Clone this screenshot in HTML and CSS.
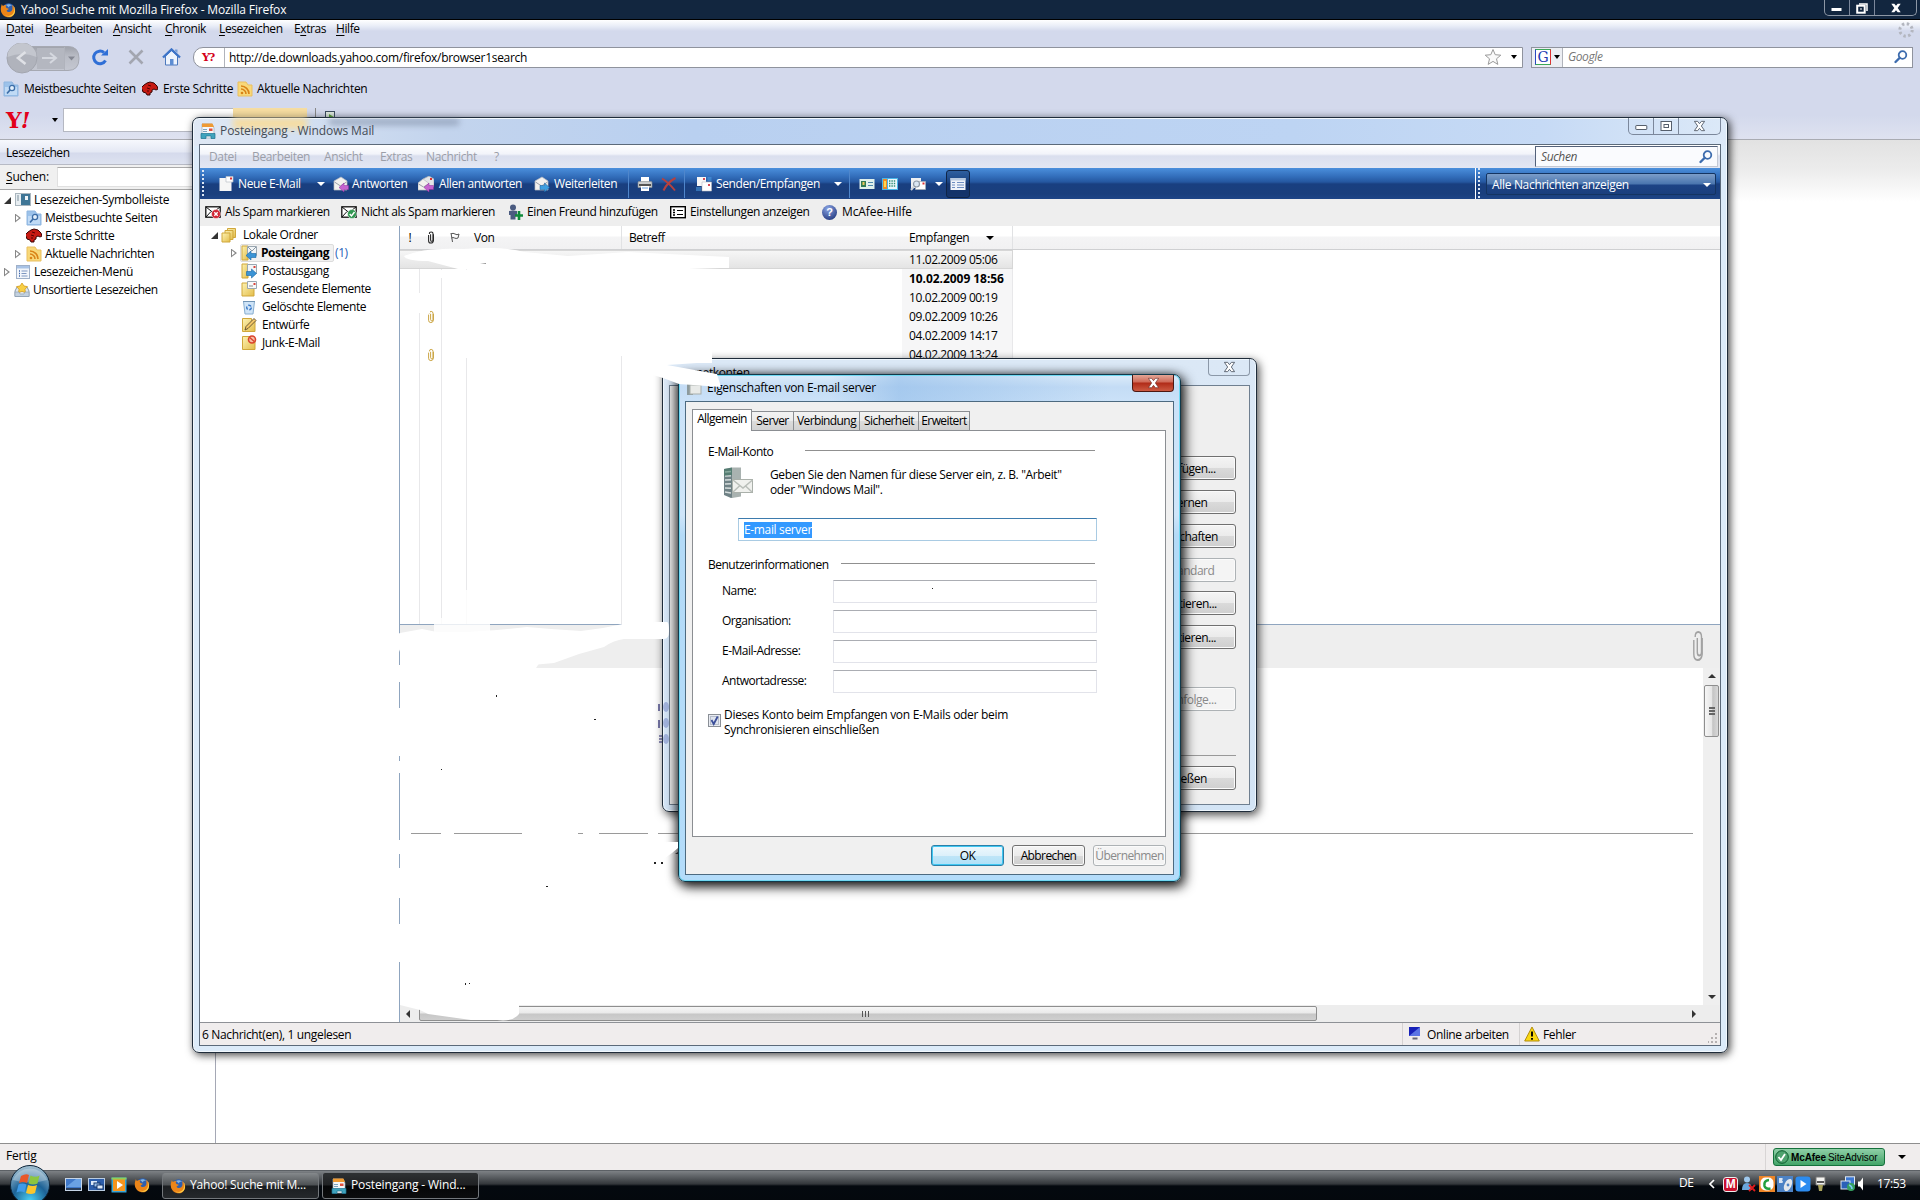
FILE: index.html
```
<!DOCTYPE html>
<html lang="de">
<head>
    <meta charset="UTF-8">
    <title>Yahoo! Suche mit Mozilla Firefox - Mozilla Firefox</title>
    <link rel="stylesheet" href="styles.css">
</head>
<body>
    <!-- Shared icons -->
    <svg class="defs" width="0" height="0">
        <defs>
            <linearGradient id="gFolder" x1="0" y1="0" x2="1" y2="1"><stop offset="0" stop-color="#fdf3b5"/><stop offset="1" stop-color="#e3bd4a"/></linearGradient>
            <radialGradient id="gOrb" cx=".5" cy=".9" r=".9"><stop offset="0" stop-color="#49d0f5"/><stop offset=".5" stop-color="#1d6296"/><stop offset="1" stop-color="#a8c4d4"/></radialGradient>
        </defs>
        <symbol id="firefox" viewBox="0 0 16 16">
            <circle cx="8.6" cy="7.4" r="6.2" fill="#2f5fae"/>
            <path d="M6 3c2-1.500 5-1 6 1-2-.5-3 .3-3 1.500z" fill="#7fb6e8"/>
            <path d="M2 2c0 1 .5 1.500 1 2 1-.8 2-1 3.500-1C5.500 4 5.500 5 6.500 6c1 .6 2 .5 2.500.8-.5 1-2 1-2.500 2 .8 1.500 3.500 1.800 5 .2C13 7.500 12.500 4.500 12 3c3 2 4 5.500 2.500 8.500C13 15 9.500 16 6.500 15 2.500 13.800.5 10 .8 6.500 1 4.500 1.500 3 2 2z" fill="#ec8518"/>
            <path d="M13.500 4c1.500 3 1 7-2 9-2 1.300-4.500 1.200-6.500 0 3 2.800 8 2 9.500-1.800 1-2.500.5-5.200-1-7.200z" fill="#fbd24a"/>
        </symbol>
        <symbol id="mostvisited" viewBox="0 0 16 16">
            <path d="M1 1h8l2 3h4v11H1z" fill="#9cc2ea" stroke="#8fb6e0"/>
            <path d="M2 6h12v8H2z" fill="#c0daf5"/>
            <circle cx="9" cy="7" r="2.600" fill="#e4f0fc" stroke="#3c6da6" stroke-width="1.300"/>
            <path d="M7 9l-3 3.500" stroke="#3c6da6" stroke-width="1.700"/>
        </symbol>
        <symbol id="dino" viewBox="0 0 16 16">
            <path d="M2 4l3-2 3-1 4 1 3 3 1 3-2 1-2-1-2 1 0 2-2 1 0 2-3 0-1-2-3-1-1-3-1-1z" fill="#c61a12" stroke="#3a0503"/>
            <path d="M6 4l3 1M5 7l3 1M5 10l2 0" stroke="#500" />
        </symbol>
        <symbol id="rss" viewBox="0 0 16 16">
            <path d="M1 1h8l2 3h4v11H1z" fill="#f8d879" stroke="#e9bf60"/>
            <path d="M4 8a5 5 0 0 1 5 5M4 5a8 8 0 0 1 8 8" fill="none" stroke="#d98316" stroke-width="1.600"/>
            <circle cx="5" cy="12" r="1.300" fill="#d98316"/>
        </symbol>
        <symbol id="bmbar" viewBox="0 0 16 16">
            <rect x=".5" y="1.500" width="15" height="12" fill="#e8eef2" stroke="#aab6be"/>
            <rect x="6" y="2" width="9" height="11" fill="#3f7696"/><rect x="10" y="4" width="3" height="4" fill="#eef4f8"/>
            <path d="M2 4h2M2 6h2M2 8h2" stroke="#7d8f9b"/>
        </symbol>
        <symbol id="bmmenu" viewBox="0 0 16 16">
            <rect x="1.500" y="1.500" width="13" height="13" fill="#f3f6fb" stroke="#9fb0c8"/>
            <rect x="2" y="2" width="12" height="2.500" fill="#a9c3e6"/>
            <path d="M4 7h1M4 9.500h1M4 12h1" stroke="#3b66ab" stroke-width="1.500"/><path d="M6.500 7h6M6.500 9.500h5M6.500 12h6" stroke="#7e97c0"/>
        </symbol>
        <symbol id="unsorted" viewBox="0 0 16 16">
            <path d="M1 9l2-4h10l2 4v5.500H1z" fill="#dfe6ee" stroke="#8a9aac"/>
            <path d="M8 1l2 3 3.500.6-2.500 2.600.4 3.500L8 9.300l-3.400 1.400.4-3.500L2.500 4.600 6 4z" fill="#f8cf45" stroke="#d79e1d" stroke-width=".8"/>
            <path d="M1 10h4l1 2h4l1-2h4v4.500H1z" fill="#c3d1df" stroke="#8a9aac" stroke-width=".6"/>
        </symbol>
        <symbol id="mailapp" viewBox="0 0 16 16">
            <path d="M2 1h10l2 4v10H2z" fill="#f4f7f9" stroke="#9ba9b4" stroke-width=".7"/>
            <path d="M2 .5h10.500l1.500 3.500H2z" fill="#ee9a33"/>
            <rect x="9" y="5.500" width="3.500" height="2.500" fill="#e2503f"/>
            <path d="M3 6.500h4M3 8.500h4" stroke="#7da4bf"/>
            <path d="M1 10.500h14v5h-4v-2.500H6v2.500H1z" fill="#3fa3bd" stroke="#1c7390" stroke-width=".7"/>
        </symbol>
        <symbol id="search" viewBox="0 0 16 16">
            <circle cx="9.500" cy="6" r="3.800" fill="none" stroke="#3d6cae" stroke-width="1.800"/>
            <path d="M6.500 9L2.500 13" stroke="#3d6cae" stroke-width="2.400" stroke-linecap="round"/>
        </symbol>
        <symbol id="folders" viewBox="0 0 16 16">
            <path d="M6.500 1.500h8v9h-8z" fill="url(#gFolder)" stroke="#d0a73b"/>
            <path d="M4 3.500h8v9H4z" fill="url(#gFolder)" stroke="#d0a73b"/>
            <path d="M1 6h8v9H1z" fill="url(#gFolder)" stroke="#d0a73b"/>
        </symbol>
        <symbol id="inbox" viewBox="0 0 16 16">
            <path d="M1 1h6v14H1z" fill="url(#gFolder)" stroke="#d0a73b"/>
            <path d="M6.500 1.500h9v9h-9z" fill="#f2f5f7" stroke="#9aa7b1"/><path d="M7 2l4 4 4-4" fill="none" stroke="#8a98a4"/>
            <path d="M5 10.500l5-4.500v2.500h5v4h-5V15z" fill="#3b94d6" stroke="#1667a5" stroke-width=".6"/>
        </symbol>
        <symbol id="outbox" viewBox="0 0 16 16">
            <path d="M1 1h6v14H1z" fill="url(#gFolder)" stroke="#d0a73b"/>
            <path d="M6.500 1.500h9v9h-9z" fill="#f2f5f7" stroke="#9aa7b1"/><path d="M12.500 3h2v2h-2z" fill="#d9433a"/>
            <path d="M15.500 10.500L10.500 6v2.500h-5v4h5V15z" fill="#3b94d6" stroke="#1667a5" stroke-width=".6"/>
        </symbol>
        <symbol id="sent" viewBox="0 0 16 16">
            <path d="M1 2h10v2h2v11H1z" fill="url(#gFolder)" stroke="#d0a73b"/>
            <path d="M6.500.5h9v7h-9z" fill="#f9fafb" stroke="#9aa7b1"/><path d="M12.500 2h2v2h-2z" fill="#d9433a"/><path d="M8 5h4" stroke="#888"/>
        </symbol>
        <symbol id="bin" viewBox="0 0 16 16">
            <path d="M2.500 2.500h11l-1.500 12.500h-8z" fill="#cfe4f7" stroke="#88aed0"/>
            <path d="M2 2.500h12" stroke="#6f93b4"/><circle cx="8" cy="8.500" r="2.300" fill="none" stroke="#3979c9" stroke-width="1.400" stroke-dasharray="3 1.500"/>
        </symbol>
        <symbol id="draft" viewBox="0 0 16 16">
            <path d="M1.500 1.500h9v2h3.500v11h-12.500z" fill="url(#gFolder)" stroke="#d0a73b"/>
            <path d="M4 13l1-3.500 8-8 2 2-8 8z" fill="#f3c768" stroke="#5c4b2b" stroke-width=".9"/>
        </symbol>
        <symbol id="junk" viewBox="0 0 16 16">
            <path d="M1.500 1.500h9v2h3.500v11h-12.500z" fill="url(#gFolder)" stroke="#d0a73b"/>
            <circle cx="11" cy="4.500" r="3.500" fill="#f7c0a8" stroke="#d9442c" stroke-width="1.600"/><path d="M8.700 2.500l4.600 4" stroke="#d9442c" stroke-width="1.400"/>
        </symbol>
        <symbol id="newmail" viewBox="0 0 16 16">
            <path d="M1.500 2h12v13h-12z" fill="#f6f6f6"/><path d="M8 .5h7v5.500H8z" fill="#fff" stroke="#b9bfc6" stroke-width=".7"/><path d="M12 1.500h2v2h-2z" fill="#d33"/>
        </symbol>
        <symbol id="reply" viewBox="0 0 16 16">
            <path d="M1 5l7-4 6 4v9H1z" fill="#f3f1ee" stroke="#b9bcc2" stroke-width=".7"/><path d="M1.500 6l6 4 6-4" fill="none" stroke="#9b9fa8"/>
            <path d="M6 11.500L11 7v2.500h4.500v4H11V16z" fill="#c663cf" stroke="#8c2f9a" stroke-width=".5"/>
        </symbol>
        <symbol id="replyall" viewBox="0 0 16 16">
            <path d="M5 3l6-3 5 3v8H5z" fill="#e4e6e8" stroke="#a9adb5" stroke-width=".7"/>
            <path d="M0 7l5-4 5.500 4v7H0z" fill="#f3f1ee" stroke="#b9bcc2" stroke-width=".7"/><path d="M.5 8l5 3 5-3" fill="none" stroke="#9b9fa8"/><path d="M12 2h2v2h-2z" fill="#d33"/>
            <path d="M6 11.500L11 7v2.500h4.500v4H11V16z" fill="#c663cf" stroke="#8c2f9a" stroke-width=".5"/>
        </symbol>
        <symbol id="forward" viewBox="0 0 16 16">
            <path d="M1 5l7-4 6 4v9H1z" fill="#f3f1ee" stroke="#b9bcc2" stroke-width=".7"/><path d="M1.500 6l6 4 6-4" fill="none" stroke="#9b9fa8"/>
            <path d="M15.500 11.500L10.500 7v2.500H6v4h4.500V16z" fill="#3f9fe0" stroke="#145f9f" stroke-width=".5"/>
        </symbol>
        <symbol id="printer" viewBox="0 0 16 16">
            <rect x="4" y="1" width="8" height="6" fill="#fff"/><path d="M1 6.500q0-1 1-1h12q1 0 1 1v5H1z" fill="#c9ccce" stroke="#8c9194" stroke-width=".6"/>
            <rect x="2" y="8" width="12" height="2" fill="#555"/><rect x="4" y="10" width="8" height="5" fill="#fff"/><path d="M5 12h6" stroke="#6aa0e0"/>
        </symbol>
        <symbol id="delete" viewBox="0 0 16 16">
            <path d="M1 2.500c5 3 9 7 13 12M14.500 2C9 5 5 9 2.500 14.500" fill="none" stroke="#b5413f" stroke-width="2"/>
        </symbol>
        <symbol id="sendrecv" viewBox="0 0 16 16">
            <path d="M1 1h9v9H1z" fill="#f7f7f7"/><path d="M6 6h9.500v9H6z" fill="#fff" stroke="#b8bcc4" stroke-width=".6"/>
            <path d="M7 2h2v2H7zM12 8h2v2h-2z" fill="#d84a56"/><path d="M11.500 2h4M11.500 4h4M0 12h5M0 14h5" stroke="#4fa4ea"/>
        </symbol>
        <symbol id="contacts" viewBox="0 0 16 16">
            <rect x=".5" y="3" width="15" height="10" fill="#dff0ec"/><rect x="2" y="5" width="5" height="6" fill="#2f7c55"/><rect x="3.500" y="6" width="2" height="3" fill="#e9c65a"/><path d="M9 6.500h5M9 9.500h5" stroke="#4e88ad"/>
        </symbol>
        <symbol id="calendar" viewBox="0 0 16 16">
            <rect x="0" y="2" width="16" height="12" fill="#49b6e8"/><rect x="1" y="3" width="4" height="10" fill="#f08a25"/><rect x="6" y="3" width="9" height="10" fill="#eaf7fb"/>
            <path d="M7 5h7M7 7.500h7M7 10h7" stroke="#2f8f74" stroke-width="1.300" stroke-dasharray="1.400 1"/><rect x="2" y="5" width="2" height="6" fill="#ffd94d"/>
        </symbol>
        <symbol id="findmail" viewBox="0 0 16 16">
            <path d="M1 2h10v10H1z" fill="#eef0f2"/><path d="M5.500 5.500h10v8h-10z" fill="#fff" stroke="#a9b0b8" stroke-width=".7"/><path d="M12.500 6.500h2v2h-2z" fill="#d33"/>
            <circle cx="6.500" cy="8" r="3" fill="#dbe7f3" stroke="#8f9aa6" stroke-width="1.200"/><path d="M4 10.500L1 14" stroke="#cfd4da" stroke-width="2"/>
        </symbol>
        <symbol id="layout" viewBox="0 0 16 16">
            <rect x=".5" y="2" width="15" height="12" fill="#eef3f9"/><rect x=".5" y="2" width="15" height="2.500" fill="#b7c9e0"/>
            <path d="M2 6.500h3M2 9h3M2 11.500h3M7 6.500h7M7 9h7M7 11.500h7" stroke="#6e8ec0"/>
        </symbol>
        <symbol id="spam" viewBox="0 0 16 16">
            <rect x=".8" y="2.800" width="14.400" height="10.400" fill="#fff" stroke="#111" stroke-width="1.300"/><path d="M1 3l7 5.500L15 3M1 13l5-5.500" fill="none" stroke="#111"/>
            <circle cx="11" cy="10" r="4.500" fill="#d02433" stroke="#fff" stroke-width=".5"/><path d="M9.300 8.300l3.400 3.400M12.700 8.300l-3.400 3.400" stroke="#fff" stroke-width="1.400"/>
        </symbol>
        <symbol id="nospam" viewBox="0 0 16 16">
            <rect x=".8" y="2.800" width="14.400" height="10.400" fill="#fff" stroke="#111" stroke-width="1.300"/><path d="M1 3l7 5.500L15 3M1 13l5-5.500" fill="none" stroke="#111"/>
            <circle cx="11" cy="10" r="4.500" fill="#2f9650" stroke="#fff" stroke-width=".5"/><path d="M8.700 10l1.800 2 3-4" fill="none" stroke="#fff" stroke-width="1.400"/>
        </symbol>
        <symbol id="friend" viewBox="0 0 16 16">
            <circle cx="6" cy="3.500" r="3" fill="#4b5b80"/><path d="M2 7q4-1 8 0v4H8.500v4.500h-5V11H2z" fill="#4b5b80"/>
            <path d="M12 7v9M8 11.500h8" stroke="#0f8a3a" stroke-width="2.600"/>
        </symbol>
        <symbol id="settings" viewBox="0 0 16 16">
            <rect x=".7" y="2.700" width="14.600" height="11" fill="#fff" stroke="#000" stroke-width="1.400"/>
            <path d="M3 6h2M3 8.500h2M3 11h2" stroke="#000" stroke-width="1.400"/><path d="M7 6.500h6M7 10.500h6" stroke="#000" stroke-width="1.200"/>
        </symbol>
        <symbol id="clip" viewBox="0 0 10 16">
            <path d="M3.500 4v7q0 1.800 1.500 1.800T6.500 11V3.500Q6.500 1 4.200 1T2 3.500" fill="none" transform="translate(1)"/>
            <path d="M2 5v7q0 3 2.800 3T8 12V4" fill="none"/>
        </symbol>
        <symbol id="closex" viewBox="0 0 14 12">
            <path d="M1.500 1h3.500l2 2.500L9 1h3.500L9 6l3.500 5H9L7 8.500 5 11H1.500L5 6z"/>
        </symbol>
        <symbol id="warn" viewBox="0 0 16 16">
            <path d="M8 1l7.300 14H.7z" fill="#f9d813" stroke="#b28d0b" stroke-linejoin="round"/><path d="M8 5.500v5M8 12v1.800" stroke="#000" stroke-width="1.900"/>
        </symbol>
    </svg>

    <div class="desktop">
        <!-- Firefox -->
        <div class="firefox">
            <div class="ff-title">
                <svg class="i16"><use href="#firefox"/></svg>
                <span class="t ff-title-text">Yahoo! Suche mit Mozilla Firefox - Mozilla Firefox</span>
                <div class="caption dark">
                    <span class="cap"><svg width="12" height="12"><rect x=".5" y="6" width="10" height="3" fill="#fff"/></svg></span>
                    <span class="cap"><svg width="12" height="12"><path d="M3 2h8v7" fill="none" stroke="#fff" stroke-width="1.500"/><rect x="1.200" y="3.700" width="7.500" height="7" fill="none" stroke="#fff" stroke-width="2"/><path d="M4 6.500h2v1H4z" fill="#fff"/></svg></span>
                    <span class="cap wide"><svg width="12" height="12"><use href="#closex" fill="#fff"/></svg></span>
                </div>
            </div>
            <div class="ff-chrome">
                <div class="ff-menu">
                    <span class="t"><u>D</u>atei</span>
                    <span class="t"><u>B</u>earbeiten</span>
                    <span class="t"><u>A</u>nsicht</span>
                    <span class="t"><u>C</u>hronik</span>
                    <span class="t"><u>L</u>esezeichen</span>
                    <span class="t">E<u>x</u>tras</span>
                    <span class="t"><u>H</u>ilfe</span>
                    <svg class="throbber" width="16" height="16"><circle cx="8" cy="8" r="6.200" fill="none" stroke="#b3b6bf" stroke-width="3" stroke-dasharray="2.400 2.470"/></svg>
                </div>
                <div class="ff-nav">
                    <svg class="backfwd" width="80" height="32" viewBox="0 0 80 32">
                        <defs><linearGradient id="gNav" x1="0" y1="0" x2="0" y2="1"><stop offset="0" stop-color="#9fa2ab"/><stop offset=".4" stop-color="#b9bcc5"/><stop offset="1" stop-color="#c4c7d1"/></linearGradient></defs>
                        <path d="M20 3.500h48q11 0 11 12t-11 12H20z" fill="url(#gNav)" stroke="#a6a9b2"/>
                        <path d="M37 5h27v21H37z" fill="#b4b7c0"/><path d="M64.500 4v23" stroke="#b0b3bc"/>
                        <circle cx="22" cy="15" r="15" fill="#b0b3bc" stroke="#a3a6af"/>
                        <path d="M7.500 14a14.500 14 0 0 1 29 0q-14-6-29 0z" fill="#c3c6ce"/>
                        <path d="M25.500 9L18 15l7.500 6" fill="none" stroke="#dfe1e6" stroke-width="2.600"/>
                        <path d="M50 10l6 5-6 5M42 15h13" fill="none" stroke="#d5d8df" stroke-width="2"/>
                        <path d="M68 13.500h7l-3.500 4z" fill="#858893"/>
                    </svg>
                    <svg width="18" height="18" viewBox="0 0 18 18" class="reload"><path d="M14.500 12.500A6.300 6.300 0 1 1 13 4.500" fill="none" stroke="#2f6fd6" stroke-width="3"/><path d="M10 7.500h7V1z" fill="#2f6fd6"/></svg>
                    <svg width="18" height="18" viewBox="0 0 18 18" class="stop"><path d="M2.500 2.500l13 13M15.500 2.500l-13 13" stroke="#a3a6b0" stroke-width="2.600"/></svg>
                    <svg width="19" height="18" viewBox="0 0 19 18" class="home"><path d="M3.500 8v9h12V8L9.500 2.500z" fill="#eef4fd" stroke="#4c79bd"/><path d="M1 9.500L9.500 1.500 18 9.500" fill="none" stroke="#3d74c8" stroke-width="2.400"/><path d="M8 11h3.500v6H8z" fill="#5d8dd2"/><path d="M13 1.500h2.500V5L13 3z" fill="#7aa0d8"/></svg>
                    <div class="url">
                        <span class="favicon">Y?</span>
                        <span class="t addr">http://de.downloads.yahoo.com/firefox/browser1search</span>
                        <svg width="18" height="18" viewBox="0 0 18 18"><path d="M9 1.500l2.200 5.200 5.600.5-4.300 3.600 1.300 5.600L9 13.400l-4.800 3 1.300-5.600L1.200 7.200l5.600-.5z" fill="#fafafa" stroke="#9a9a9a"/></svg>
                        <i class="caret"></i>
                    </div>
                    <div class="gsearch">
                        <span class="gbox"><b class="glogo">G</b><i class="caret"></i></span>
                        <span class="t hint">Google</span>
                        <svg class="i16"><use href="#search"/></svg>
                    </div>
                </div>
                <div class="ff-bookmarks">
                    <svg class="i16"><use href="#mostvisited"/></svg><span class="t">Meistbesuchte Seiten</span>
                    <svg class="i16"><use href="#dino"/></svg><span class="t">Erste Schritte</span>
                    <svg class="i16"><use href="#rss"/></svg><span class="t">Aktuelle Nachrichten</span>
                </div>
                <div class="yahoo">
                    <b class="ylogo">Y<em>!</em></b>
                    <i class="caret"></i>
                    <span class="yinput"></span>
                    <span class="ybutton"></span>
                    <span class="ysep"></span>
                    <svg class="hilite" width="13" height="13"><rect x=".5" y=".5" width="9" height="11" fill="#dfeadf" stroke="#3d4d5f"/><path d="M4 3l8 5-8 4z" fill="#57a533"/></svg>
                </div>
            </div>
            <div class="ff-body">
                <div class="sidebar">
                    <div class="side-head t">Lesezeichen</div>
                    <div class="side-search"><span class="t"><u>S</u>uchen:</span><span class="side-input"></span></div>
                    <div class="tree">
                        <div class="node"><i class="open"></i><svg class="i16"><use href="#bmbar"/></svg><span class="t">Lesezeichen-Symbolleiste</span></div>
                        <div class="node sub"><i class="closed"></i><svg class="i16"><use href="#mostvisited"/></svg><span class="t">Meistbesuchte Seiten</span></div>
                        <div class="node sub"><i></i><svg class="i16"><use href="#dino"/></svg><span class="t">Erste Schritte</span></div>
                        <div class="node sub"><i class="closed"></i><svg class="i16"><use href="#rss"/></svg><span class="t">Aktuelle Nachrichten</span></div>
                        <div class="node"><i class="closed"></i><svg class="i16"><use href="#bmmenu"/></svg><span class="t">Lesezeichen-Menü</span></div>
                        <div class="node unsorted"><i></i><svg class="i16"><use href="#unsorted"/></svg><span class="t">Unsortierte Lesezeichen</span></div>
                    </div>
                </div>
                <div class="content"></div>
            </div>
            <div class="ff-status">
                <span class="t">Fertig</span>
                <span class="advisor">
                    <span class="badge"><svg width="14" height="14"><circle cx="7" cy="7" r="6.300" fill="#4fa36f" stroke="#0d5b2d"/><path d="M3.500 7l2.500 3 4-6" fill="none" stroke="#fff" stroke-width="1.800"/></svg><b>McAfee</b><span>SiteAdvisor</span></span>
                    <i class="caret big"></i>
                </span>
            </div>
        </div>

        <!-- Windows Mail -->
        <div class="win mail">
            <div class="mail-title">
                <i class="smudge yellow"></i><i class="smudge gray"></i>
                <svg class="i16"><use href="#mailapp"/></svg>
                <span class="t">Posteingang - Windows Mail</span>
                <div class="caption">
                    <span class="cap"><svg width="13" height="12"><rect x=".8" y="5.500" width="11" height="4" rx=".5" fill="#fff" stroke="#565f6c"/></svg></span>
                    <span class="cap"><svg width="13" height="12"><rect x="1" y="1.500" width="10.500" height="9" fill="#fff" stroke="#565f6c"/><rect x="4" y="4.500" width="4.500" height="3" fill="#fff" stroke="#565f6c"/></svg></span>
                    <span class="cap wide"><svg width="13" height="12"><use href="#closex" fill="#fff" stroke="#565f6c"/></svg></span>
                </div>
            </div>
            <div class="mail-client">
                <div class="mail-menu">
                    <span class="t">Datei</span><span class="t">Bearbeiten</span><span class="t">Ansicht</span><span class="t">Extras</span><span class="t">Nachricht</span><span class="t">?</span>
                    <div class="mail-search"><span class="t">Suchen</span><svg class="i16"><use href="#search"/></svg></div>
                </div>
                <div class="bluebar">
                    <i class="grip"></i>
                    <svg class="i16"><use href="#newmail"/></svg><span class="t">Neue E-Mail</span><i class="caret white"></i>
                    <svg class="i16"><use href="#reply"/></svg><span class="t">Antworten</span>
                    <svg class="i16"><use href="#replyall"/></svg><span class="t">Allen antworten</span>
                    <svg class="i16"><use href="#forward"/></svg><span class="t">Weiterleiten</span>
                    <i class="sep"></i>
                    <svg class="i16"><use href="#printer"/></svg>
                    <svg class="i16"><use href="#delete"/></svg>
                    <i class="sep"></i>
                    <svg class="i16"><use href="#sendrecv"/></svg><span class="t">Senden/Empfangen</span><i class="caret white"></i>
                    <i class="sep"></i>
                    <svg class="i16"><use href="#contacts"/></svg>
                    <svg class="i16"><use href="#calendar"/></svg>
                    <svg class="i16"><use href="#findmail"/></svg>
                    <i class="caret white"></i>
                    <span class="pressed"><svg class="i16"><use href="#layout"/></svg></span>
                    <i class="gripline"></i>
                    <div class="viewsel"><span class="t">Alle Nachrichten anzeigen</span><i class="caret white"></i></div>
                </div>
                <div class="mcbar">
                    <svg class="i16"><use href="#spam"/></svg><span class="t">Als Spam markieren</span>
                    <svg class="i16"><use href="#nospam"/></svg><span class="t">Nicht als Spam markieren</span>
                    <svg class="i16"><use href="#friend"/></svg><span class="t">Einen Freund hinzufügen</span>
                    <svg class="i16"><use href="#settings"/></svg><span class="t">Einstellungen anzeigen</span>
                    <span class="help">?</span><span class="t mchelp">McAfee-Hilfe</span>
                </div>
                <div class="mail-body">
                    <div class="folders">
                        <div class="fnode root"><i class="open"></i><svg class="i16"><use href="#folders"/></svg><span class="t">Lokale Ordner</span></div>
                        <div class="fnode sel"><i class="closed"></i><span class="selbox"><svg class="i16"><use href="#inbox"/></svg><b class="t">Posteingang</b></span><span class="t count">(1)</span></div>
                        <div class="fnode"><i></i><svg class="i16"><use href="#outbox"/></svg><span class="t">Postausgang</span></div>
                        <div class="fnode"><i></i><svg class="i16"><use href="#sent"/></svg><span class="t">Gesendete Elemente</span></div>
                        <div class="fnode"><i></i><svg class="i16"><use href="#bin"/></svg><span class="t">Gelöschte Elemente</span></div>
                        <div class="fnode"><i></i><svg class="i16"><use href="#draft"/></svg><span class="t">Entwürfe</span></div>
                        <div class="fnode"><i></i><svg class="i16"><use href="#junk"/></svg><span class="t">Junk-E-Mail</span></div>
                    </div>
                    <div class="right">
                        <div class="list">
                            <div class="row head">
                                <span class="mid">!</span>
                                <span class="mid"><svg width="8" height="13" stroke="#222" stroke-width="1.300"><use href="#clip"/></svg></span>
                                <span class="mid"><svg width="11" height="11"><path d="M2 1l1.500 9M2 2q2-1.500 4 0t4 0l-1 4q-2 1-3.500 0t-3 0" fill="none" stroke="#555"/></svg></span>
                                <span class="t">Von</span><span class="t">Betreff</span><span class="t">Empfangen <i class="caret big"></i></span>
                            </div>
                            <div class="row first"><i></i><i></i><i></i><i></i><i></i><span class="t">11.02.2009 05:06</span></div>
                            <div class="row"><i></i><i></i><i></i><i></i><i></i><b class="t">10.02.2009 18:56</b></div>
                            <div class="row"><i></i><i></i><i></i><i></i><i></i><span class="t">10.02.2009 00:19</span></div>
                            <div class="row"><i></i><i class="mid"><svg width="8" height="14" stroke="#c9a13c" stroke-width="1.200"><use href="#clip"/></svg></i><i></i><i></i><i></i><span class="t">09.02.2009 10:26</span></div>
                            <div class="row"><i></i><i></i><i></i><i></i><i></i><span class="t">04.02.2009 14:17</span></div>
                            <div class="row"><i></i><i class="mid"><svg width="8" height="14" stroke="#c9a13c" stroke-width="1.200"><use href="#clip"/></svg></i><i></i><i></i><i></i><span class="t">04.02.2009 13:24</span></div>
                            <div class="row fill"><i></i><i></i><i></i><i></i><i></i><i></i></div>
                        </div>
                        <div class="preview-head"><svg width="14" height="32" viewBox="0 0 10 16" preserveAspectRatio="none" stroke="#a2a2a2" stroke-width="1"><use href="#clip"/></svg></div>
                        <div class="preview">
                            <div class="page"><div class="rule"></div></div>
                            <div class="vscroll"><i class="up"></i><span class="vthumb"><i></i><i></i><i></i></span><i class="down"></i></div>
                        </div>
                        <div class="hscroll"><i class="left"></i><span class="hthumb"><i></i><i></i><i></i></span><i class="rightarr"></i></div>
                    </div>
                </div>
                <div class="mail-status">
                    <span class="t">6 Nachricht(en), 1 ungelesen</span>
                    <span class="cell online"><svg width="13" height="14"><rect x="1" y="1" width="11" height="9" fill="#1720b8"/><path d="M1 10h11l0-9z" fill="#5b74e4"/><path d="M4.500 12.500h5" stroke="#667" stroke-width="2"/></svg><span class="t">Online arbeiten</span></span>
                    <span class="cell error"><svg class="i16"><use href="#warn"/></svg><span class="t">Fehler</span>
                        <svg class="sizegrip" width="10" height="10"><path d="M8 0v2M8 4v2M8 8v2M4 4v2M4 8v2M0 8v2" stroke="#b5b1b1" stroke-width="2"/></svg>
                    </span>
                </div>
            </div>
        </div>

        <!-- Internetkonten -->
        <div class="win accounts">
            <div class="dlg-title"><span class="t">Internetkonten</span>
                <span class="closebtn"><svg width="13" height="12"><use href="#closex" fill="#fff" stroke="#565f6c"/></svg></span>
            </div>
            <div class="accounts-client">
                <button class="btn">Hinzufügen...</button>
                <button class="btn">Entfernen</button>
                <button class="btn">Eigenschaften</button>
                <button class="btn off">Als Standard</button>
                <button class="btn">Importieren...</button>
                <button class="btn">Exportieren...</button>
                <button class="btn off order">Reihenfolge...</button>
                <div class="line"></div>
                <button class="btn">Schließen</button>
            </div>
        </div>

        <!-- Eigenschaften -->
        <div class="win props">
            <div class="dlg-title">
                <svg class="i16" viewBox="0 0 16 16"><rect x="1" y="3" width="6" height="12" fill="#8d9a9d"/><rect x="4" y="5" width="11" height="9" fill="#e8eae8" stroke="#a9afac"/></svg>
                <span class="t">Eigenschaften von E-mail server</span>
                <span class="closebtn red"><svg width="13" height="12"><use href="#closex" fill="#fff" stroke="#6b2a24" stroke-width=".7"/></svg></span>
            </div>
            <div class="props-client">
                <div class="tabs">
                    <span class="tab active">Allgemein</span><span class="tab">Server</span><span class="tab">Verbindung</span><span class="tab">Sicherheit</span><span class="tab">Erweitert</span>
                </div>
                <div class="panel">
                    <div class="group konto"><span class="d">E-Mail-Konto</span><i></i></div>
                    <div class="intro">
                        <svg width="32" height="32" viewBox="0 0 32 32">
                            <path d="M1 2l8-1.500 1 30L8 31l-7-3z" fill="#6f8185"/><path d="M9 .5h9v29l-9 1.500z" fill="#a9b2b0"/>
                            <path d="M2 5l6-.5M2 9l6-.3M2 13l6-.3M2 17l6-.3M2 21l6 .3M2 25l6 1" stroke="#d6dddd" stroke-width="1.500"/>
                            <path d="M1 2l8-1.500V8L1 9z" fill="#3e7a62" opacity=".5"/>
                            <rect x="9.500" y="12.500" width="20" height="13" fill="#f0f1ee" stroke="#aab0aa"/><path d="M10 13l10 8 9.500-8M10 25l7-6.500M29 25l-7-6.500" fill="none" stroke="#b9beb9" stroke-width="1.500"/>
                        </svg>
                        <span class="d">Geben Sie den Namen für diese Server ein, z. B. "Arbeit"<br>oder "Windows Mail".</span>
                    </div>
                    <div class="accname"><mark class="d">E-mail server</mark></div>
                    <div class="group user"><span class="d">Benutzerinformationen</span><i></i></div>
                    <div class="field"><span class="d">Name:</span><i></i></div>
                    <div class="field"><span class="d">Organisation:</span><i></i></div>
                    <div class="field"><span class="d">E-Mail-Adresse:</span><i></i></div>
                    <div class="field"><span class="d">Antwortadresse:</span><i></i></div>
                    <div class="check">
                        <svg width="13" height="13"><rect x=".5" y=".5" width="12" height="12" fill="#e8ebf2" stroke="#8a8f96"/><rect x="2.500" y="2.500" width="8" height="8" fill="#dfe4ee" stroke="#b6bdca"/><path d="M3.500 6l2.200 4 4-7.500" fill="none" stroke="#3c4f9a" stroke-width="1.800"/></svg>
                        <span class="d">Dieses Konto beim Empfangen von E-Mails oder beim<br>Synchronisieren einschließen</span>
                    </div>
                </div>
                <div class="buttons">
                    <button class="btn default">OK</button>
                    <button class="btn">Abbrechen</button>
                    <button class="btn off">Übernehmen</button>
                </div>
            </div>
        </div>

        <!-- Painted-over areas -->
        <svg class="paint" width="1920" height="1200" viewBox="0 0 1920 1200">
            <g fill="#fff">
                <path d="M404 256q20-9 60-7 40-3 60 3l44 4 60-4 101 5v11h-8l-160 5-103-4-30-8q-22 0-24-5z"/>
                <path d="M424 270h474v8H424zM445 278h453v14H445zM418 293h12v20h-12zM445 292h451v20H445zM455 312h440v34H455zM466 346h152v12H466zM618 346h8v10h-8z"/>
                <path d="M625 346h87v17h-15l-30 2 50 9 4 13-42-3-16-6-30-9z"/>
                <path d="M434 618h56v16h-56zM465 590h4v28h-4z" opacity=".8"/>
                <path d="M400 633l22-4 15 3h30l30-2 30-3 24 2 30 2 22-3 20-4h27l5-2h12q2 0 2 9 0 8-5 8h-40q-10 1-20 8l-25 7-25 9-22 2H400V652l-2-5v-13z"/>
                <path d="M400 645h60l80 17-4 6H400z"/>
                <path d="M622 621h31v5h-31zM396 665h5v17h-5zM396 708h5v48h-5zM396 761h5v12h-5zM396 840h5v14h-5zM396 868h5v30h-5zM396 924h5v38h-5z"/>
                <path d="M441 832h13v4h-13zM522 832h56v4h-56zM583 832h16v4h-16zM648 832h10v4h-10z"/>
                <path d="M668 842h10v6l-6 5-10 7-12-2v-14z"/>
                <path d="M400 1004h119v10q-6 8-22 6h-26l-43-6-8-4-20-5z"/>
                <path d="M931 599h14v3h-14z"/>
            </g>
            <g fill="#222">
                <path d="M496 695h1v2h-1zM594 719h2v1h-2zM441 769h1v1h-1zM546 886h2v1h-2zM465 983h1v2h-1zM469 983h1v1h-1zM654 862h2v2h-2zM661 862h2v2h-2zM932 588h1v1h-1zM675 854h3v-2z"/>
                <path d="M480 263l6 1v-1z" opacity=".5"/>
            </g>
            <g stroke="#1d1d66" stroke-width="1.200"><path d="M659 704v7M659 720v8M659 736h3M659 739h3M659 742h3"/></g>
            <g fill="#6d7fc0" opacity=".5"><ellipse cx="666" cy="707" rx="3" ry="5"/><ellipse cx="666" cy="723" rx="3" ry="5"/><ellipse cx="666" cy="739" rx="3" ry="5"/></g>
        </svg>

        <!-- Taskbar -->
        <div class="taskbar">
            <svg class="orb" width="42" height="36" viewBox="0 0 42 36">
                <circle cx="21" cy="21" r="19.500" fill="url(#gOrb)" stroke="#0b2338"/>
                <path d="M4 16a18 17 0 0 1 34 0q-17 5-34 0z" fill="#fff" opacity=".28"/>
                <path d="M12 12q5-3 8-1l-2 8q-4-2-8 0z" fill="#e8582a"/><path d="M21.500 11.500q5 2.500 9 0l-2 8q-4 2-9 0z" fill="#8cc63f"/>
                <path d="M9.500 20.500q4-2 8 0l-2 8q-4-2-8 0z" fill="#3f9be8"/><path d="M19 21q5 2 9 0l-2 8q-4 2-9 0z" fill="#fbc62c"/>
            </svg>
            <div class="quick">
                <svg width="17" height="14"><rect x=".5" y=".5" width="16" height="12" fill="#3f78c9" stroke="#c5d4e6"/><path d="M1 9l10-8h5v8z" fill="#6aa2e4"/><path d="M1 11h15" stroke="#2a3f5b" stroke-width="2"/></svg>
                <svg width="17" height="14"><rect x=".5" y=".5" width="16" height="12" fill="#2d5eab" stroke="#b9cbe0"/><rect x="3" y="3" width="6" height="4" fill="#dce9f8"/><rect x="6" y="5" width="6" height="4" fill="#9cc0ea" stroke="#17386e"/><rect x="9" y="7" width="6" height="4" fill="#dce9f8" stroke="#17386e"/></svg>
                <svg width="17" height="16"><rect x=".5" y=".5" width="15" height="15" fill="#37a4d8"/><rect x="2" y="2" width="12" height="12" fill="#f7941d"/><path d="M6 4l6 4-6 4z" fill="#fff"/><path d="M.5.5h15v2H.5z" fill="#8fd05a"/></svg>
                <svg class="i16"><use href="#firefox"/></svg>
            </div>
            <div class="task"><svg class="i16"><use href="#firefox"/></svg><span class="t">Yahoo! Suche mit M...</span></div>
            <div class="task current"><svg class="i16"><use href="#mailapp"/></svg><span class="t">Posteingang - Wind...</span></div>
            <div class="tray">
                <span class="t">DE</span>
                <svg width="8" height="10"><path d="M6 1L2 5l4 4" fill="none" stroke="#fff" stroke-width="1.700"/></svg>
                <span class="mtray">M</span>
                <svg class="i16" viewBox="0 0 16 16"><circle cx="6" cy="3.500" r="3" fill="#9fc9ee"/><path d="M1 14q0-7 5-7t5 7z" fill="#6aa6dc"/><path d="M8 9l6 6M14 9l-6 6" stroke="#e01c1c" stroke-width="1.800"/></svg>
                <svg class="i16" viewBox="0 0 16 16"><rect width="16" height="16" fill="#ee8526"/><rect x="1.500" y="1.500" width="13" height="13" rx="5" fill="#fff"/><path d="M10 4q-5.500.5-4.500 6 1 3.500 6 2.500" fill="none" stroke="#22a040" stroke-width="2.600"/></svg>
                <svg class="i16" viewBox="0 0 16 16"><rect width="16" height="16" fill="#4d82c4"/><path d="M2 2v5h3q2-1 0-2.500Q6.500 2 5 2z" fill="#fff" opacity=".8"/><ellipse cx="11" cy="9" rx="3.500" ry="6.500" fill="#e3e7ec" transform="rotate(25 11 9)"/><circle cx="11" cy="9" r="1.400" fill="#4d82c4"/></svg>
                <svg class="i16" viewBox="0 0 16 16"><rect x=".5" y=".5" width="15" height="15" rx="3" fill="#2c8cf0"/><path d="M5.500 4l6 4-6 4z" fill="#fff"/></svg>
                <svg class="i16" viewBox="0 0 16 16"><path d="M3 1h9v8H3z" fill="#f3f3f0" stroke="#777"/><path d="M4 5h7v2H4z" fill="#555"/><path d="M5 9h5l-1 6H6z" fill="#a9a25a"/></svg>
                <svg class="i16 net" viewBox="0 0 16 16"><rect x="5.500" y=".8" width="9" height="8" fill="#3b77d2" stroke="#dfe8f2"/><rect x="1" y="5" width="9" height="8" fill="#2b60b8" stroke="#dfe8f2"/><circle cx="11" cy="11" r="4" fill="#35a060"/><path d="M9 9q3 1 3 4" stroke="#7cc9f5" stroke-width="1.500" fill="none"/></svg>
                <svg width="8" height="16"><path d="M1 5.500h2L6 1.500v13L3 10.500H1z" fill="#fff"/></svg>
                <span class="t clock">17:53</span>
            </div>
        </div>
    </div>
</body>
</html>
```

FILE: styles.css
```
* {
    box-sizing: border-box;
    margin: 0;
    padding: 0;
}

body {
    width: 1920px;
    height: 1200px;
    overflow: hidden;
    font-family: "Open Sans", "Noto Sans", sans-serif;
    font-size: 12px;
    letter-spacing: -0.4px;
    color: #000;
    background: #fff;
}

i, em { font-style: normal; }
svg { display: block; flex: none; }
.defs { position: absolute; }
.i16 { width: 16px; height: 16px; }
.t, .d { white-space: nowrap; line-height: 16px; }
u { text-underline-offset: 2px; }

.desktop {
    position: relative;
    width: 1920px;
    height: 1200px;
}

.caret {
    width: 0;
    height: 0;
    border: 3px solid transparent;
    border-top: 4px solid #000;
    border-bottom: 0;
}
.caret.big { border-width: 4px 4px 0; }
.caret.white { border-width: 4px 4px 0; border-top-color: #fff; }

/* ---------- Firefox ---------- */
.firefox {
    display: flex;
    flex-direction: column;
    height: 1170px;
}

.ff-title {
    display: flex;
    align-items: center;
    height: 20px;
    color: #fff;
    background: #12263f;
    border-bottom: 1px solid #000;
}
.ff-title-text { margin-left: 5px; letter-spacing: -0.13px; }

.caption {
    display: flex;
    margin-left: auto;
    align-self: flex-start;
    height: 17px;
    border: 1px solid #7b879b;
    border-top: 0;
    border-radius: 0 0 5px 5px;
}
.caption.dark { height: 16px; margin-right: 3px; border-color: #8d97a5; }
.cap {
    display: flex;
    justify-content: center;
    align-items: center;
    width: 25px;
    border-right: 1px solid #7b879b;
}
.cap.wide { width: 41px; border-right: 0; }

.ff-chrome {
    height: 120px;
    background: linear-gradient(#fff 0, #e9edf7 6px, #d3d9ec 11px, #d3d9ec 95px, #dfe2f0);
    border-bottom: 1px solid #a9abb2;
}

.ff-menu {
    display: grid;
    grid-template-columns: 39px 68px 52px 54px 75px 42px 1fr 16px;
    align-items: start;
    height: 20px;
    padding: 1px 6px 0 6px;
}
.throbber { margin-top: 1px; }

.ff-nav {
    display: flex;
    align-items: center;
    height: 34px;
}
.backfwd { margin-top: 3px; }
.reload { margin-left: 11px; }
.stop { margin-left: 18px; }
.home { margin-left: 17px; }

.url {
    display: flex;
    align-items: center;
    width: 1330px;
    height: 21px;
    margin-left: 12px;
    padding-right: 5px;
    background: #fff;
    border: 1px solid #8f939d;
    border-radius: 10px 0 0 10px;
}
.url svg { margin-right: 2px; }
.favicon {
    width: 31px;
    height: 19px;
    padding-left: 8px;
    border-right: 1px solid #b0b3bb;
    font: bold 11px/19px "DejaVu Serif", serif;
    letter-spacing: -1px;
    color: #d4001a;
}
.addr { flex: 1; margin-left: 4px; padding-top: 1px; letter-spacing: -0.3px; }
.url .caret { margin-left: 7px; }

.gsearch {
    display: flex;
    align-items: center;
    width: 382px;
    height: 21px;
    margin-left: 8px;
    padding-right: 3px;
    background: #fff;
    border: 1px solid #8f939d;
}
.gbox {
    display: flex;
    align-items: center;
    gap: 3px;
    width: 31px;
    height: 19px;
    padding-left: 3px;
    background: #eceef3;
    border-right: 1px solid #b0b3bb;
}
.glogo {
    width: 16px;
    height: 16px;
    border: 1px solid #3aa757;
    border-right-color: #d33;
    border-left-color: #2a48c0;
    background: #fff;
    font: 14px/14px "DejaVu Serif", serif;
    text-align: center;
    color: #1d3bb3;
}
.hint { flex: 1; margin-left: 5px; font-style: italic; color: #777; }

.ff-bookmarks {
    display: grid;
    grid-template-columns: 21px 118px 21px 74px 20px 120px;
    align-items: center;
    height: 30px;
    padding-left: 3px;
    letter-spacing: -0.3px;
}
.ff-bookmarks .t:nth-child(2) { letter-spacing: -0.4px; }

.yahoo {
    display: flex;
    align-items: center;
    height: 32px;
    padding-left: 6px;
}
.ylogo {
    width: 46px;
    font: bold 22px/24px "DejaVu Serif", serif;
    letter-spacing: -1px;
    color: #e2001a;
}
.ylogo em { font-style: italic; }
.yinput { width: 170px; height: 24px; margin-left: 5px; background: #fff; border: 1px solid #b5b8c2; border-right: 0; }
.ybutton { width: 74px; height: 24px; background: #f6dda1; }
.ysep { width: 1px; height: 18px; margin: 0 9px 6px 8px; background: #888; }
.hilite { margin-bottom: 5px; }

.ff-body { display: flex; flex: 1; }
.sidebar { width: 216px; border-right: 1px solid #a5a8b5; background: #fff; }
.side-head {
    height: 25px;
    padding: 5px 0 0 6px;
    background: linear-gradient(#f6f8fd, #e4e8f4 12px, #d5daec 13px, #dde2f0);
    border-bottom: 1px solid #b7bac5;
}
.side-search {
    display: flex;
    align-items: center;
    height: 25px;
    padding-left: 6px;
    background: #f0f0f0;
    border-bottom: 1px solid #a9a9a9;
    letter-spacing: -0.2px;
}
.side-search .t { width: 51px; }
.side-input { flex: 1; height: 20px; background: #fff; border: 1px solid #e0e0e0; border-top-color: #aaa; }
.tree { padding-top: 1px; letter-spacing: -0.32px; }
.node {
    display: grid;
    grid-template-columns: 11px 19px 1fr;
    align-items: center;
    height: 18px;
    padding-left: 4px;
}
.node.sub { padding-left: 15px; }
.node.sub .t { letter-spacing: -0.36px; }
.node.unsorted { padding-left: 3px; letter-spacing: -0.45px; }
.open {
    width: 0;
    height: 0;
    border-left: 7px solid transparent;
    border-bottom: 7px solid #333;
}
.closed {
    width: 6px;
    height: 9px;
    background: #888;
    clip-path: polygon(0 0, 100% 50%, 0 100%, 0 0, 1px 2px, 1px 7px, 4px 50%, 1px 2px);
}
.content {
    flex: 1;
    background: linear-gradient(#e2e2e2 0, #ececec 30px, #fff 62px);
}

.ff-status {
    display: flex;
    align-items: center;
    height: 27px;
    padding-left: 6px;
    background: #f0eded;
    border-top: 1px solid #8e8e8e;
}
.ff-status > .t { margin-top: -2px; letter-spacing: -0.2px; }
.advisor {
    display: flex;
    align-items: center;
    height: 26px;
    width: 155px;
    margin-left: auto;
    padding-left: 7px;
    border-left: 1px solid #d8d5d5;
}
.badge {
    display: flex;
    align-items: center;
    gap: 2px;
    width: 112px;
    height: 18px;
    padding-left: 1px;
    border: 1px solid #15713c;
    border-radius: 3px;
    background: linear-gradient(#8fcfa7, #43a468);
    font: 10px "Liberation Sans", sans-serif;
    letter-spacing: -0.1px;
    white-space: nowrap;
}
.advisor .caret { margin-left: 13px; }

/* ---------- Windows ---------- */
.win {
    position: absolute;
    display: flex;
    flex-direction: column;
    border: 1px solid #1f2c3a;
    border-radius: 7px;
}
.mail {
    left: 192px;
    top: 117px;
    width: 1536px;
    height: 936px;
    padding: 0 6px 6px;
    background: linear-gradient(90deg, #dfe8f4 0, #c3d4ed 250px, #b9d0f0 500px, #bdd4f3 1100px, #c6daf5 1350px, #dce9f8);
    box-shadow: inset 0 0 0 1px #f2f8fd, 2px 2px 8px rgba(0, 0, 0, .75);
}
.mail::before {
    content: "";
    position: absolute;
    inset: 28px 1px 1px;
    background: #dcebf9;
    border-radius: 0 0 6px 6px;
}
.mail-title {
    position: relative;
    display: flex;
    align-items: center;
    height: 26px;
    padding-left: 1px;
    color: #444b55;
}
.mail-title .i16, .mail-title > .t { position: relative; }
.mail-title > .t { margin-left: 4px; letter-spacing: -0.08px; }
.smudge { position: absolute; filter: blur(3px); }
.smudge.yellow { left: 34px; top: 0; width: 74px; height: 11px; background: #f6dda1; }
.smudge.gray { left: 130px; top: 1px; width: 130px; height: 6px; background: #76839b; opacity: .6; }

.mail-client {
    position: relative;
    display: flex;
    flex-direction: column;
    flex: 1;
    border: 1px solid #5c6a7a;
    background: #fff;
}
.mail-menu {
    display: grid;
    grid-template-columns: 43px 72px 56px 46px 68px 1fr 183px;
    align-items: center;
    height: 23px;
    padding: 0 2px 0 9px;
    color: #9b9ea8;
    background: linear-gradient(#fff, #f2f4fa 9px, #dadfee 11px, #e3e7f3);
    letter-spacing: -0.35px;
}
.mail-search {
    display: flex;
    align-items: center;
    justify-content: space-between;
    height: 21px;
    padding: 0 3px 0 5px;
    background: #fafbfe;
    border: 1px solid #c4c9d4;
    border-top-color: #53617a;
    border-left-color: #53617a;
    color: #555;
    font-style: italic;
}

.bluebar {
    display: grid;
    grid-template-columns: 16px 20px 79px 16px 19px 66px 21px 95px 20px 74px 9px 24px 23px 12px 20px 118px 15px 10px 23px 28px 25px 11px 1fr 11px 234px;
    align-items: center;
    height: 31px;
    padding-left: 2px;
    color: #fff;
    background: linear-gradient(#4b8fdc 0, #3470bd 8px, #2557a0 14px, #193f80 16px, #1a3f7d 26px, #1e4587);
}
.grip {
    width: 2px;
    height: 28px;
    background: repeating-linear-gradient(#dce6f4 0 2px, transparent 2px 4px);
}
.sep { width: 1px; height: 28px; background: #4f86cb; }
.pressed {
    display: flex;
    align-items: center;
    justify-content: center;
    width: 24px;
    height: 28px;
    border: 1px solid #0f2547;
    border-radius: 3px;
    background: rgba(10, 30, 70, .35);
}
.gripline {
    grid-column: 24;
    width: 5px;
    height: 31px;
    border-left: 1px solid #fff;
    background: repeating-linear-gradient(#dce6f4 0 2px, transparent 2px 4px) 2px 0 / 2px 100% no-repeat;
}
.viewsel {
    display: flex;
    align-items: center;
    justify-content: space-between;
    width: 230px;
    height: 22px;
    margin-top: 1px;
    padding: 1px 4px 0 5px;
    border: 1px solid #143461;
    border-radius: 2px;
    background: linear-gradient(#7b9dc9, #4a75ae 10px, #1d4385 11px, #1a3f7d);
    letter-spacing: -0.32px;
}

.mcbar {
    display: grid;
    grid-template-columns: 20px 116px 20px 146px 20px 143px 20px 132px 20px 1fr;
    align-items: center;
    height: 27px;
    padding: 0 0 1px 5px;
    background: #eee;
}
.mchelp { letter-spacing: -0.1px; }
.help {
    width: 15px;
    height: 15px;
    border-radius: 50%;
    background: radial-gradient(circle at 40% 25%, #8aa4e4, #10256c);
    color: #fff;
    font: bold 11px/15px "Liberation Sans", sans-serif;
    text-align: center;
}

.mail-body { display: flex; flex: 1; border-bottom: 1px solid #8e9196; min-height: 0; }
.folders { width: 200px; border-right: 1px solid #8fa5bf; background: #fff; }
.fnode {
    display: grid;
    grid-template-columns: 10px 21px 1fr;
    align-items: center;
    height: 18px;
    padding-left: 31px;
}
.fnode.root { padding-left: 11px; }
.fnode.root .t { margin-left: 1px; }
.fnode.sel { grid-template-columns: 9px 95px 1fr; }
.selbox {
    display: flex;
    align-items: center;
    gap: 4px;
    height: 18px;
    width: 94px;
    border: 1px solid #dcdcdc;
    border-radius: 2px;
    background: #f1f1f1;
}
.selbox b { letter-spacing: -0.5px; }
.count { color: #2862b8; }

.right { display: flex; flex-direction: column; flex: 1; min-width: 0; }
.list { display: flex; flex-direction: column; height: 399px; border-bottom: 1px solid #8fa5bf; }
.row {
    display: grid;
    grid-template-columns: 20px 22px 25px 155px 280px 111px;
    align-items: center;
    height: 19px;
    width: 613px;
}
.row > * { height: 19px; border-right: 1px solid #e8e8ea; }
.row > :nth-child(5) { border-right: 0; }
.row > :last-child { padding-left: 7px; line-height: 20px; background: #f6f6f7; }
.row .mid { display: flex; align-items: center; justify-content: center; }
.row.head {
    width: 100%;
    height: 24px;
    background: linear-gradient(#fff 10px, #f4f4f5 11px, #f1f1f2);
    border-bottom: 1px solid #cfd0d2;
}
.row.head > * { height: 23px; line-height: 24px; padding-left: 7px; border-color: #e1e2e4; }
.row.head > .mid { padding-left: 0; border-right: 0; }
.row.head > :last-child { display: flex; align-items: center; background: none; }
.row.head .caret { margin-left: 17px; }
.row.first { background: linear-gradient(#f6f6f6, #e4e4e4); border: 1px solid #d6d6d6; border-left: 0; }
.row.first > * { border: 0; height: 17px; line-height: 17px; background: none; }
.row.fill { flex: 1; }
.row.fill > * { height: 100%; }
.row b { letter-spacing: -0.05px; }

.preview-head {
    display: flex;
    justify-content: flex-end;
    height: 43px;
    padding: 5px 15px 0 0;
    background: #eee;
}
.preview { display: flex; flex: 1; }
.page { flex: 1; }
.rule { height: 1px; margin: 165px 10px 0 11px; background: #9a9a9a; }

.vscroll {
    display: flex;
    flex-direction: column;
    align-items: center;
    width: 17px;
    background: #efefef;
}
.up { border: 4px solid transparent; border-bottom-color: #333; border-top: 0; margin: 6px 0 7px; }
.down { border: 4px solid transparent; border-top-color: #333; border-bottom: 0; margin: auto 0 6px; }
.vthumb {
    display: flex;
    flex-direction: column;
    justify-content: center;
    align-items: center;
    gap: 1px;
    width: 15px;
    height: 52px;
    border: 1px solid #8e8e8e;
    border-radius: 2px;
    background: linear-gradient(90deg, #f6f6f6, #e6e6e6 50%, #c4c4c4 60%, #d8d8d8);
}
.vthumb i { width: 6px; height: 2px; background: #666; }
.hscroll { display: flex; align-items: center; height: 17px; background: #ededed; }
.left { border: 4px solid transparent; border-right-color: #333; border-left: 0; margin: 0 9px 0 6px; }
.rightarr { border: 4px solid transparent; border-left-color: #333; border-right: 0; margin-left: auto; margin-right: 24px; }
.hthumb {
    display: flex;
    justify-content: center;
    align-items: center;
    gap: 2px;
    width: 898px;
    height: 15px;
    padding-right: 5px;
    border: 1px solid #8e8e8e;
    border-radius: 2px;
    background: linear-gradient(#f6f6f6, #e9e9e9 48%, #c6c6c6 52%, #cfcfcf);
}
.hthumb i { width: 1px; height: 6px; background: #555; }

.mail-status {
    display: flex;
    align-items: center;
    height: 22px;
    padding-left: 2px;
    background: #f0eded;
    letter-spacing: -0.35px;
}
.mail-status .t { padding-top: 2px; }
.cell { display: flex; align-items: center; height: 22px; border-left: 1px solid #d5d2d2; }
.online { width: 117px; margin-left: auto; padding-left: 5px; gap: 6px; }
.online svg { margin-top: -2px; }
.error { width: 201px; padding-left: 4px; gap: 3px; }
.sizegrip { margin: 8px 2px 0 auto; }

/* ---------- Dialogs ---------- */
.dlg-title {
    position: relative;
    display: flex;
    align-items: center;
    height: 26px;
    padding-left: 5px;
}
.closebtn {
    display: flex;
    justify-content: center;
    align-items: center;
    align-self: flex-start;
    width: 42px;
    height: 17px;
    margin-left: auto;
    border: 1px solid #8b98a8;
    border-top: 0;
    border-radius: 0 0 4px 4px;
}
.closebtn.red {
    border-color: #4e1711;
    background: linear-gradient(#e3a596, #cf6a58 7px, #b02b18 8px, #cc5a42);
}
.btn {
    border: 1px solid #707070;
    border-radius: 3px;
    background: linear-gradient(#f4f4f4, #ebebeb 50%, #dadada 51%, #cfcfcf);
    box-shadow: inset 0 0 0 1px #fbfbfb;
    font: inherit;
    letter-spacing: -0.5px;
    color: #000;
    white-space: nowrap;
}
.btn.off { color: #8a8a8a; border-color: #adb2b5; background: #f4f4f4; }
.btn.default {
    border: 1px solid #2c7fa8;
    background: linear-gradient(#eef8fd, #dcf0fa 50%, #bfe5f7 51%, #aee0f8);
    box-shadow: inset 0 0 0 1px #3fc7f2;
}

.accounts {
    left: 662px;
    top: 358px;
    width: 595px;
    height: 454px;
    padding: 0 6px 6px;
    background: linear-gradient(#dbe8f6, #d3e4f5);
    box-shadow: inset 0 0 0 1px #eef6fd, 2px 3px 10px rgba(0, 0, 0, .7);
}
.accounts .dlg-title .t { margin: 1px 0 0 -3px; }
.accounts-client {
    display: flex;
    flex-direction: column;
    align-items: flex-end;
    flex: 1;
    padding: 70px 13px 0 0;
    background: #efefef;
    border: 1px solid #6f7f90;
}
.accounts .btn { width: 106px; height: 24px; margin-bottom: 10px; padding-right: 2px; }
.accounts .btn:nth-child(4) { margin-bottom: 9px; }
.accounts .order { margin-top: 28px; margin-bottom: 44px; }
.line { width: 540px; height: 1px; margin-bottom: 10px; background: #999; }

.props {
    left: 678px;
    top: 374px;
    width: 503px;
    height: 508px;
    padding: 0 6px 6px;
    background: linear-gradient(90deg, transparent 150px, rgba(140, 185, 232, .55) 220px, rgba(140, 185, 232, .3) 320px, transparent 430px) 0 0 / 100% 26px no-repeat, linear-gradient(#dcecfa 0, #c4dcf5 12px, #cbe2f8 27px, #cfe5f9 140px, #b4daf7 160px, #b4dcfa);
    border-color: #12394a;
    box-shadow: inset 0 0 0 1px #6fd8f2, 3px 4px 12px 1px rgba(0, 0, 0, .85), -3px 0 10px rgba(0, 0, 0, .5);
}
.props .dlg-title { height: 26px; padding-left: 1px; }
.props .dlg-title .t { margin: -1px 0 0 4px; padding: 0 6px 0 1px; letter-spacing: -0.28px; }
.props-client {
    display: flex;
    flex-direction: column;
    flex: 1;
    padding: 7px 8px 0 6px;
    background: #f0f0f0;
    border: 1px solid #4d6a80;
    letter-spacing: -0.5px;
}
.tabs { display: flex; align-items: flex-end; height: 21px; letter-spacing: -0.6px; }
.tab {
    height: 19px;
    width: 42px;
    border: 1px solid #8b8e92;
    border-left: 0;
    border-bottom: 0;
    background: linear-gradient(#f3f3f3, #ebebeb 50%, #dcdcdc 51%, #d2d2d2);
    line-height: 18px;
    text-align: center;
}
.tab:nth-child(3) { width: 66px; }
.tab:nth-child(4) { width: 59px; }
.tab:nth-child(5) { width: 51px; }
.tab.active {
    width: 60px;
    height: 22px;
    margin-bottom: -1px;
    border-left: 1px solid #8b8e92;
    background: #fff;
    z-index: 1;
}
.panel {
    height: 407px;
    width: 474px;
    padding: 12px 0 0 15px;
    background: #fff;
    border: 1px solid #8b8e92;
}
.group { display: flex; align-items: flex-start; height: 24px; padding-top: 1px; }
.group i { height: 1px; margin: 6px 0 0 auto; background: #909090; }
.group.konto, .group.user { width: 387px; }
.konto i { width: 290px; }
.user i { width: 254px; }
.intro { display: flex; height: 51px; padding-left: 15px; }
.intro .d { margin-left: 15px; line-height: 15px; letter-spacing: -0.36px; }
.accname {
    width: 359px;
    height: 23px;
    margin-left: 30px;
    padding: 2px 0 0 5px;
    border: 1px solid #a9cbe3;
    border-top-color: #3d7bad;
}
mark.d { display: inline-block; height: 16px; color: #fff; background: #3399ff; letter-spacing: -0.35px; }
.group.user { margin-top: 15px; }
.field { display: grid; grid-template-columns: 111px 264px; align-items: center; height: 30px; padding-left: 14px; }
.field i { height: 23px; border: 1px solid #e2e3ea; border-top-color: #abadb3; }
.user + .field { margin-top: -4px; }
.check { display: flex; margin-top: 10px; gap: 3px; }
.check svg { margin-top: 8px; }
.check .d { margin-top: 1px; line-height: 15px; letter-spacing: -0.3px; }
.buttons { display: flex; justify-content: flex-end; gap: 8px; margin: 8px -1px 0 0; }
.buttons .btn { width: 73px; height: 21px; letter-spacing: -0.6px; }

.paint { position: absolute; left: 0; top: 0; }

/* ---------- Taskbar ---------- */
.taskbar {
    position: absolute;
    left: 0;
    top: 1170px;
    display: flex;
    align-items: flex-start;
    width: 1920px;
    height: 30px;
    color: #fff;
    background: linear-gradient(#3a3f45 0, #7d8185 1px, #55595d 8px, #33373b 14px, #04090f 16px, #04080d);
}
.orb { margin: -6px 0 0 9px; }
.quick { display: flex; align-items: center; gap: 6px; width: 95px; height: 30px; margin-left: 14px; }
.task {
    display: flex;
    align-items: center;
    gap: 4px;
    width: 157px;
    height: 27px;
    margin: 2px 4px 0 2px;
    padding-left: 7px;
    border: 1px solid #73777b;
    border-radius: 3px;
    background: linear-gradient(#85898c, #4d5154 12px, #1b1e21 13px, #25282b);
    letter-spacing: -0.2px;
}
.task .t { margin-top: -1px; }
.task + .task { margin-left: -1px; padding-left: 8px; letter-spacing: -0.12px; }
.task.current { background: linear-gradient(#2e3133, #1f2123 12px, #050607 13px, #0b0c0d); }
.tray {
    display: grid;
    grid-template-columns: 29px 15px 18px 18px 18px 18px 18px 27px 17px 20px 34px;
    align-items: center;
    height: 28px;
    margin-left: auto;
    margin-right: 9px;
}
.tray > .t:first-child { margin-top: -3px; }
.mtray {
    width: 15px;
    height: 15px;
    border: 1px solid #eee;
    border-radius: 3px;
    background: #c8102e;
    font: bold 12px/13px "Liberation Sans", sans-serif;
    text-align: center;
}
```
